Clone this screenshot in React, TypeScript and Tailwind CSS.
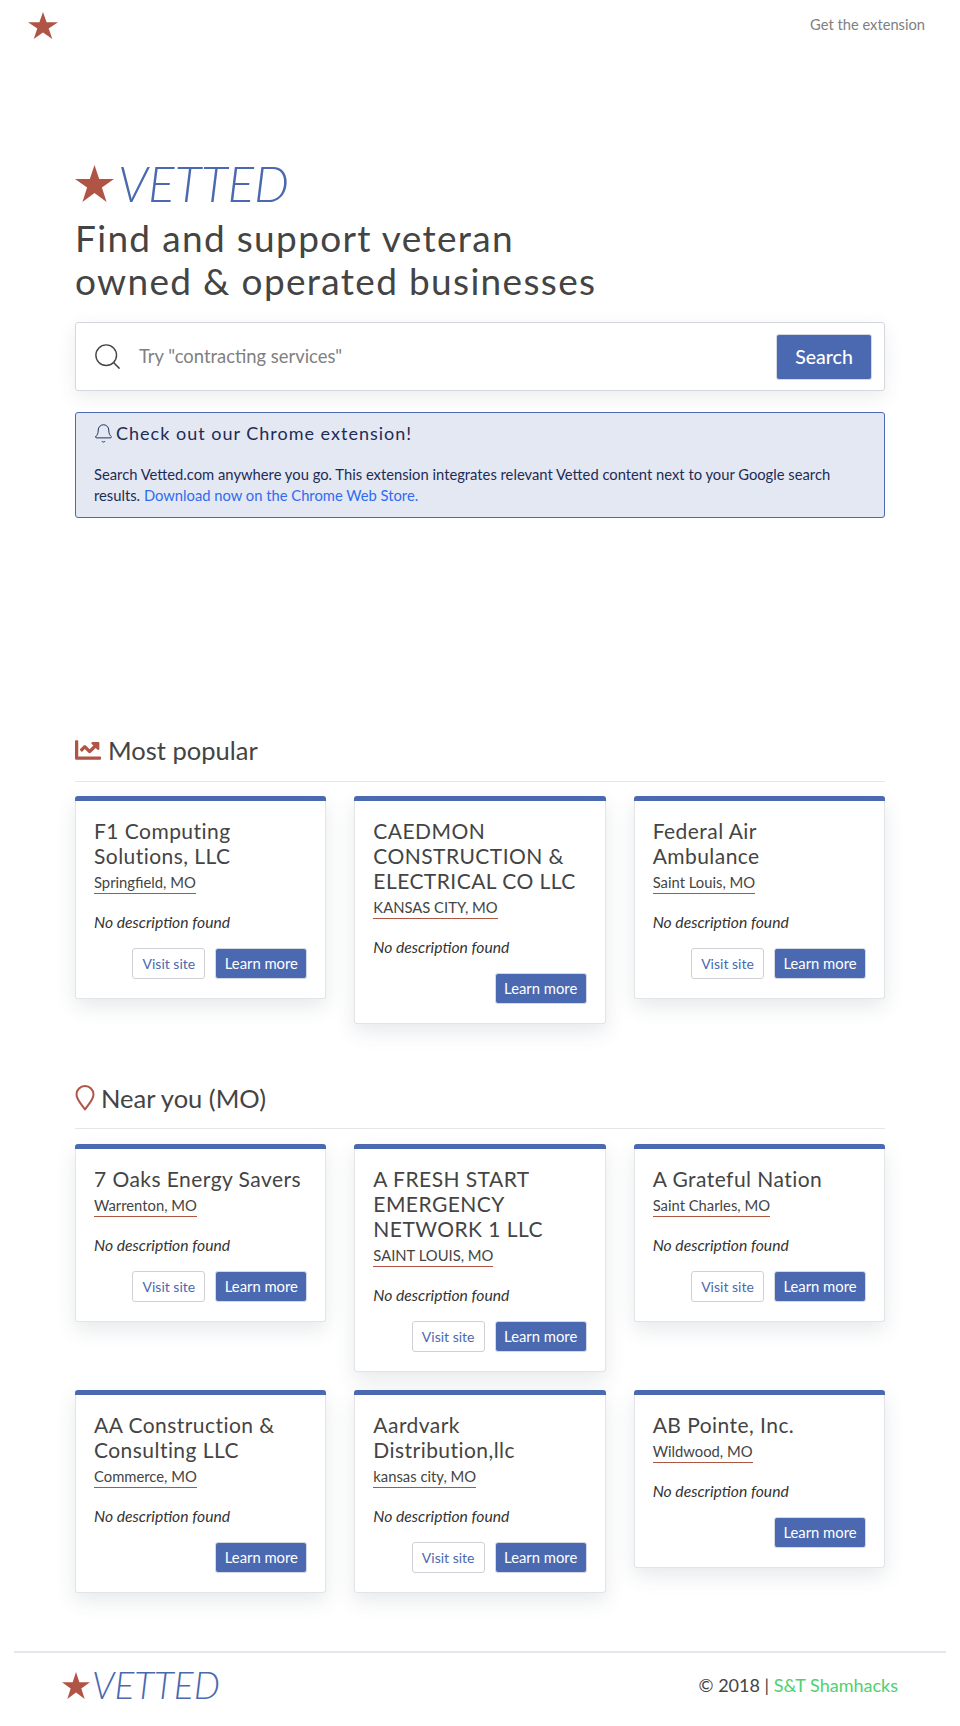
import { Search, Bell } from "lucide-react";
import { FaChartLine } from "react-icons/fa";

type Biz = { name: string; place: string; visit?: boolean };

const popular: Biz[] = [
  { name: "F1 Computing Solutions, LLC", place: "Springfield, MO", visit: true },
  { name: "CAEDMON CONSTRUCTION & ELECTRICAL CO LLC", place: "KANSAS CITY, MO" },
  { name: "Federal Air Ambulance", place: "Saint Louis, MO", visit: true },
];

const nearby: Biz[] = [
  { name: "7 Oaks Energy Savers", place: "Warrenton, MO", visit: true },
  { name: "A FRESH START EMERGENCY NETWORK 1 LLC", place: "SAINT LOUIS, MO", visit: true },
  { name: "A Grateful Nation", place: "Saint Charles, MO", visit: true },
  { name: "AA Construction & Consulting LLC", place: "Commerce, MO" },
  { name: "Aardvark Distribution,llc", place: "kansas city, MO", visit: true },
  { name: "AB Pointe, Inc.", place: "Wildwood, MO" },
];

function Star({ className }: { className: string }) {
  return (
    <svg viewBox="0 0 100 95" className={className} fill="#b05445" preserveAspectRatio="none">
      <polygon points="50,0 62,36 100,36 69,58 81,95 50,72 19,95 31,58 0,36 38,36" />
    </svg>
  );
}

function Card({ biz }: { biz: Biz }) {
  return (
    <div className="rounded-[3px] border border-[#e3e4e8] border-t-0 bg-white shadow-[0_8px_20px_rgba(60,70,90,0.12)]">
      <div className="h-[5px] rounded-t-[3px] bg-[#4a69b0] -mx-px" />
      <div className="px-[18px] pt-[17px] pb-[19px]">
        <h3 className="text-[21px] leading-[25px] tracking-[0.45px] text-[#444444]">{biz.name}</h3>
        <div className="mt-[2px]">
          <span className="inline-block border-b border-[#b05445] text-[14.8px] leading-[20px] pb-[1px] text-[#444444]">
            {biz.place}
          </span>
        </div>
        <p className="mt-[18px] text-[15.7px] leading-[21px] italic text-[#333333]">No description found</p>
        <div className="mt-[15px] flex justify-end gap-[10px]">
          {biz.visit && (
            <button className="h-[31px] w-[73px] rounded-[3px] border border-[#cfd1d6] bg-white text-[14px] text-[#4a69b0]">
              Visit site
            </button>
          )}
          <button className="h-[31px] w-[92px] rounded-[3px] border border-[#d5d9e4] bg-[#4a69b0] text-[14.8px] text-white">
            Learn more
          </button>
        </div>
      </div>
    </div>
  );
}

export default function App() {
  return (
    <div className="min-h-[1726px] bg-white font-['Lato',sans-serif] text-[#444444]">
      {/* Top bar */}
      <div className="flex items-start justify-between pl-[28px] pr-[35px] pt-[12px]">
        <Star className="h-[27px] w-[30px]" />
        <a className="mt-[2px] text-[14.7px] leading-[20px] text-[#808080]">Get the extension</a>
      </div>

      <div className="mx-auto w-[810px]">
        {/* Hero */}
        <div className="mt-[122px] flex h-[44px] items-center">
          <Star className="h-[37px] w-[39px]" />
          <span className="ml-[4px] text-[49.5px] font-light italic leading-[44px] text-[#4a69b0]">VETTED</span>
        </div>
        <h1 className="mt-[11px] text-[37px] leading-[43px] tracking-[1.33px] text-[#444444]">
          Find and support veteran
          <br />
          owned &amp; operated businesses
        </h1>

        {/* Search */}
        <div className="mt-[20px] flex h-[69px] items-center rounded-[3px] border border-[#d5d7de] bg-white pl-[16px] pr-[12px] shadow-[0_6px_18px_rgba(60,70,90,0.1)]">
          <Search className="h-[31px] w-[31px] text-[#444444]" strokeWidth={1.1} />
          <span className="ml-[16px] flex-1 text-[18.4px] text-[#808080]">Try "contracting services"</span>
          <button className="h-[46px] w-[96px] rounded-[3px] border border-[#d5d9e4] bg-[#4a69b0] text-[19.5px] font-medium text-white">
            Search
          </button>
        </div>

        {/* Extension notice */}
        <div className="mt-[21px] h-[106px] rounded-[3px] border border-[#4a69b0] bg-[#e4e8f3] px-[18px] pt-[7px] text-[#1d2c55]">
          <div className="flex items-center">
            <Bell className="-ml-[1px] h-[21px] w-[21px]" strokeWidth={1.1} />
            <span className="ml-[2px] text-[18px] leading-[26px] tracking-[1px]">Check out our Chrome extension!</span>
          </div>
          <p className="mt-[18px] text-[14.75px] leading-[21px]">
            Search Vetted.com anywhere you go. This extension integrates relevant Vetted content next to your Google search results.{" "}
            <a className="text-[#2f6bf0]">Download now on the Chrome Web Store.</a>
          </p>
        </div>

        {/* Most popular */}
        <div className="mt-[217px] flex h-[30px] items-center">
          <FaChartLine className="h-[26px] w-[26px] text-[#b05445]" />
          <h2 className="ml-[7px] text-[25.5px] leading-[30px] text-[#444444]">Most popular</h2>
        </div>
        <div className="mt-[16px] h-px bg-[#e6e6e9]" />
        <div className="mt-[14px] grid grid-cols-3 items-start gap-x-[28px]">
          {popular.map((b) => (
            <Card key={b.name} biz={b} />
          ))}
        </div>

        {/* Near you */}
        <div className="mt-[59px] flex h-[30px] items-center">
          <svg viewBox="0 0 20 26" className="h-[26px] w-[20px]" fill="none" stroke="#b05445" strokeWidth="2">
            <path d="M10 24.5 C7 20 1.5 14.5 1.5 9.5 a8.5 8.5 0 0 1 17 0 C18.5 14.5 13 20 10 24.5 Z" strokeLinejoin="round" />
          </svg>
          <h2 className="ml-[6px] text-[25.5px] leading-[30px] text-[#444444]">Near you (MO)</h2>
        </div>
        <div className="mt-[15px] h-px bg-[#e6e6e9]" />
        <div className="mt-[15px] grid grid-cols-3 items-start gap-x-[28px] gap-y-[18px]">
          {nearby.map((b) => (
            <Card key={b.name} biz={b} />
          ))}
        </div>
      </div>

      {/* Footer */}
      <div className="mx-[14px] mt-[58px] flex h-[66px] items-center justify-between border-t-2 border-[#e6e6ee] pl-[48px] pr-[48px]">
        <div className="flex items-center">
          <Star className="h-[27px] w-[28px]" />
          <span className="ml-[2px] text-[37px] font-light italic leading-[36px] text-[#4a69b0]">VETTED</span>
        </div>
        <div className="text-[18px] text-[#444444]">
          © 2018 | <span className="text-[#4fd070]">S&amp;T Shamhacks</span>
        </div>
      </div>
    </div>
  );
}
